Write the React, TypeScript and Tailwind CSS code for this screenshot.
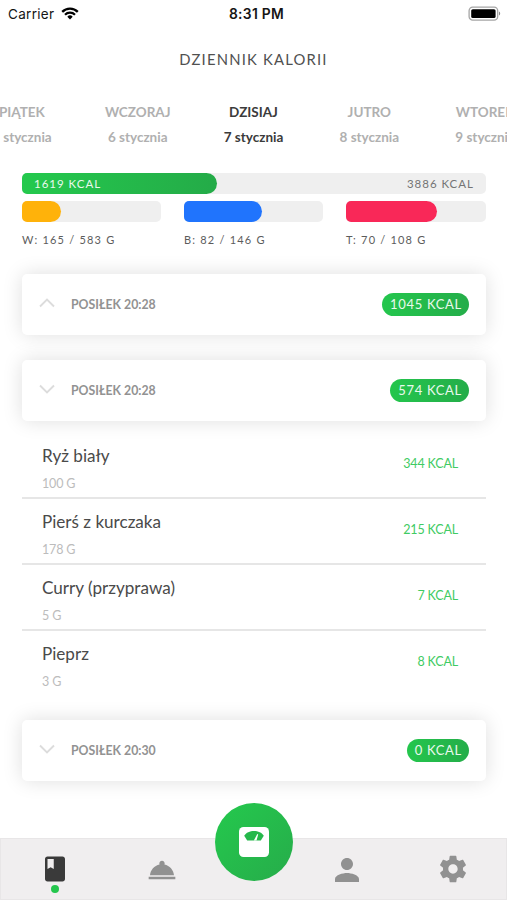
import React from "react";

type Day = { name: string; date: string; active?: boolean };

const days: Day[] = [
  { name: "PIĄTEK", date: "5 stycznia" },
  { name: "WCZORAJ", date: "6 stycznia" },
  { name: "DZISIAJ", date: "7 stycznia", active: true },
  { name: "JUTRO", date: "8 stycznia" },
  { name: "WTOREK", date: "9 stycznia" },
];

const macros = [
  { label: "W: 165 / 583 G", fill: "w-[39px] bg-[#ffb20a]" },
  { label: "B: 82 / 146 G", fill: "w-[78px] bg-[#2074fd]" },
  { label: "T: 70 / 108 G", fill: "w-[91px] bg-[#f92858]" },
];

const products = [
  { name: "Ryż biały", weight: "100 G", kcal: "344 KCAL" },
  { name: "Pierś z kurczaka", weight: "178 G", kcal: "215 KCAL" },
  { name: "Curry (przyprawa)", weight: "5 G", kcal: "7 KCAL" },
  { name: "Pieprz", weight: "3 G", kcal: "8 KCAL" },
];

function StatusBar() {
  return (
    <div className="grid h-[27px] grid-cols-3 items-center pl-[8px] pr-[6px] font-[Inter,sans-serif] text-[13.5px] text-[#151515]">
      <div className="flex items-center gap-[7px]">
        <span className="pt-px tracking-[0.3px]">Carrier</span>
        <svg width="18" height="13" viewBox="0 0 18 13" fill="none" stroke="#000">
          <path d="M1.2 4.9a11 11 0 0 1 15.6 0" strokeWidth="2.3" />
          <path d="M4 7.7a7 7 0 0 1 10 0" strokeWidth="2.2" />
          <path d="M9 12.4 6.3 9.7a3.8 3.8 0 0 1 5.4 0z" fill="#000" stroke="none" />
        </svg>
      </div>
      <div className="whitespace-nowrap pl-[4px] pt-[2px] text-center text-[13.8px] font-semibold tracking-[0.3px]">8:31 PM</div>
      <div className="flex justify-end">
        <svg width="33" height="16" viewBox="0 0 33 16">
          <rect x="1.1" y="1.1" width="28.6" height="13" rx="3.6" fill="#fff" stroke="#a5a5a5" strokeWidth="1.3" />
          <rect x="3.2" y="3.2" width="24.4" height="8.8" rx="1.6" fill="#000" />
          <path d="M31 5.6c1.6.6 1.6 3.4 0 4z" fill="#8a8a8a" />
        </svg>
      </div>
    </div>
  );
}

function MealCard({ title, kcal, open }: { title: string; kcal: string; open?: boolean }) {
  return (
    <div className="flex h-[61px] shrink-0 items-center rounded-[5px] bg-white pl-[17px] pr-[17px] shadow-[0_0_20px_rgba(0,0,0,0.13)]">
      <svg width="16" height="10" viewBox="0 0 16 10" fill="none" stroke="#dcdcdc" strokeWidth="1.9" className="-mt-[3px]">
        <path d={open ? "M1 8.5 8 1.5l7 7" : "M1 1.5l7 7 7-7"} />
      </svg>
      <span className="ml-[16px] pt-px text-[12.3px] font-bold text-[#929292]">{title}</span>
      <span className="ml-auto flex h-[23px] items-center rounded-full bg-linear-to-r from-[#24c64d] to-[#24ad49] pl-[8px] pr-[7px] text-[13px] tracking-[0.7px] text-[#e9f9ed]">
        {kcal}
      </span>
    </div>
  );
}

export default function App() {
  return (
    <div className="flex h-[900px] w-[507px] flex-col overflow-hidden bg-white font-[Lato,sans-serif] text-[#4a4a4a]">
      <StatusBar />
      <h1 className="mt-[22px] text-center text-[14.8px] leading-[20px] tracking-[1.2px] text-[#505050]">DZIENNIK KALORII</h1>

      <div className="mt-[31px] flex h-[49px] shrink-0 justify-center overflow-hidden">
        {days.map((d) => (
          <div
            key={d.name}
            className={`w-[115.8px] shrink-0 text-center text-[13.5px] font-bold leading-[24.5px] ${d.active ? "text-[#3b3b3b]" : "text-[#b0b0b0]"}`}
          >
            <div>{d.name}</div>
            <div>{d.date}</div>
          </div>
        ))}
      </div>

      <section className="mt-[24px] pl-[22px] pr-[21px]">
        <div className="flex h-[21px] items-center rounded-[5px] bg-[#efefef] text-[11.5px] tracking-[1px]">
          <div className="flex h-full w-[195px] items-center rounded-l-[5px] rounded-r-[10.5px] bg-linear-to-r from-[#24c94d] to-[#24ab48] pl-[12px] text-[#e9f9ed]">
            1619 KCAL
          </div>
          <span className="ml-auto pr-[12px] text-[#747474]">3886 KCAL</span>
        </div>
        <div className="mt-[7px] grid grid-cols-[139px_139px_140px] gap-[23px]">
          {macros.map((m) => (
            <div key={m.label}>
              <div className="h-[21px] rounded-[5px] bg-[#efefef]">
                <div className={`h-full rounded-l-[5px] rounded-r-[10.5px] ${m.fill}`} />
              </div>
              <div className="mt-[10px] whitespace-nowrap text-[11px] leading-[16px] tracking-[1.2px] text-[#5c5c5c]">{m.label}</div>
            </div>
          ))}
        </div>
      </section>

      <main className="mt-[26px] flex flex-col pl-[22px] pr-[21px]">
        <MealCard title="POSIŁEK 20:28" kcal="1045 KCAL" open />
        <div className="h-[25px]" />
        <MealCard title="POSIŁEK 20:28" kcal="574 KCAL" />
        <ul className="mt-[12px]">
          {products.map((p) => (
            <li
              key={p.name}
              className="flex h-[66px] items-center justify-between border-b-2 border-[#e6e6e6] pl-[20px] pr-[28px] last:border-transparent"
            >
              <div className="pt-[6px]">
                <div className="text-[17.1px] leading-[24px] text-[#4a4a4a]">{p.name}</div>
                <div className="mt-[7px] text-[12.5px] leading-[18px] tracking-[-0.15px] text-[#bcbcbc]">{p.weight}</div>
              </div>
              <div className="-mt-px text-[12.5px] tracking-[-0.15px] text-[#3fcb63]">{p.kcal}</div>
            </li>
          ))}
        </ul>
        <div className="h-[23px]" />
        <MealCard title="POSIŁEK 20:30" kcal="0 KCAL" />
      </main>

      <nav className="mt-auto grid h-[62px] shrink-0 grid-cols-[108px_106px_79px_105px_107px] border border-[#e8e6e7] bg-[#f0eeef]">
        <div className="flex flex-col items-center pt-[15px]">
          <svg width="30" height="30" viewBox="0 0 24 24" fill="#3a3a3a">
            <path d="M18 2H6c-1.1 0-2 .9-2 2v16c0 1.1.9 2 2 2h12c1.1 0 2-.9 2-2V4c0-1.1-.9-2-2-2zM6 4h5v8l-2.5-1.5L6 12V4z" />
          </svg>
          <span className="mt-[1px] size-[8px] rounded-full bg-[#24c64d]" />
        </div>
        <div className="flex justify-center pt-[15px]">
          <svg width="32" height="32" viewBox="0 0 24 24" fill="#919191">
            <path d="M2 17h20v2H2zm11.84-9.21c.1-.24.16-.51.16-.79 0-1.1-.9-2-2-2s-2 .9-2 2c0 .28.06.55.16.79C6.25 8.6 3.27 11.93 3 16h18c-.27-4.07-3.25-7.4-7.16-8.21z" />
          </svg>
        </div>
        <div className="-mt-[36px] flex size-[78px] items-center justify-center rounded-full bg-linear-to-br from-[#24c94d] to-[#26ac4a]">
          <svg width="30" height="30" viewBox="0 0 30 30">
            <rect width="30" height="30" rx="4.5" fill="#fff" />
            <path d="M5.2 8.8C7 5.5 11 4 15 4s8 1.5 9.8 4.8L21.8 13.5H8.2z" fill="#25b84b" />
            <path d="M14.8 13.6 18.3 7l.9.4-1.7 6.2z" fill="#fff" />
          </svg>
        </div>
        <div className="flex justify-center pt-[13px]">
          <svg width="36" height="36" viewBox="0 0 24 24" fill="#919191">
            <path d="M12 12c2.21 0 4-1.79 4-4s-1.79-4-4-4-4 1.79-4 4 1.79 4 4 4zm0 2c-2.67 0-8 1.34-8 4v2h16v-2c0-2.66-5.33-4-8-4z" />
          </svg>
        </div>
        <div className="flex justify-center pt-[14px]">
          <svg width="32" height="32" viewBox="0 0 24 24" fill="#919191">
            <path d="M19.43 12.98c.04-.32.07-.64.07-.98s-.03-.66-.07-.98l2.11-1.65c.19-.15.24-.42.12-.64l-2-3.46c-.12-.22-.39-.3-.61-.22l-2.49 1c-.52-.4-1.08-.73-1.69-.98l-.38-2.65C14.46 2.18 14.25 2 14 2h-4c-.25 0-.46.18-.49.42l-.38 2.65c-.61.25-1.17.59-1.69.98l-2.49-1c-.23-.09-.49 0-.61.22l-2 3.46c-.13.22-.07.49.12.64l2.11 1.65c-.04.32-.07.65-.07.98s.03.66.07.98l-2.11 1.65c-.19.15-.24.42-.12.64l2 3.46c.12.22.39.3.61.22l2.49-1c.52.4 1.08.73 1.69.98l.38 2.65c.03.24.24.42.49.42h4c.25 0 .46-.18.49-.42l.38-2.65c.61-.25 1.17-.59 1.69-.98l2.49 1c.23.09.49 0 .61-.22l2-3.46c.12-.22.07-.49-.12-.64l-2.11-1.65zM12 15.5c-1.93 0-3.5-1.57-3.5-3.5s1.57-3.5 3.5-3.5 3.5 1.57 3.5 3.5-1.57 3.5-3.5 3.5z" />
          </svg>
        </div>
      </nav>
    </div>
  );
}
